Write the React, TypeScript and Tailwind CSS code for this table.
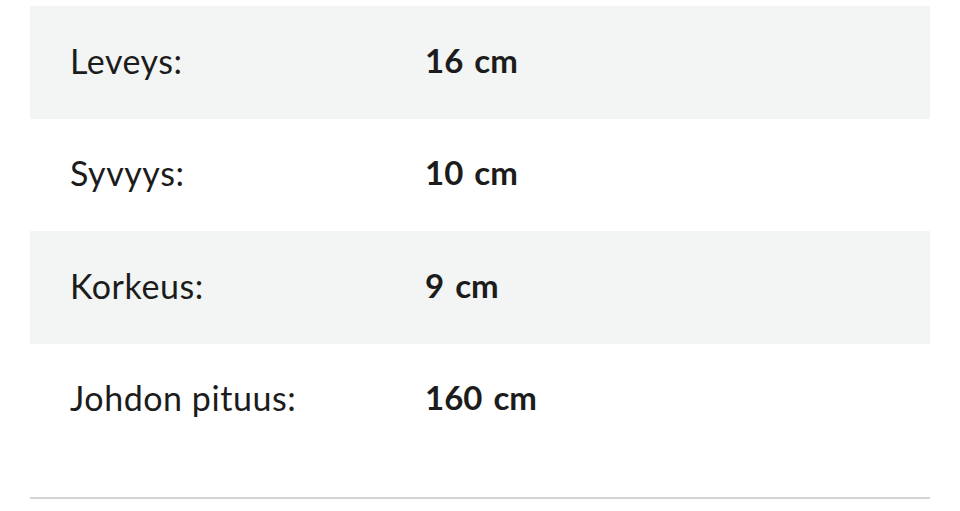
const SPECS = [
  { label: 'Leveys:', value: '16 cm' },
  { label: 'Syvyys:', value: '10 cm' },
  { label: 'Korkeus:', value: '9 cm' },
  { label: 'Johdon pituus:', value: '160 cm' },
];

export default function App() {
  return (
    <div className="w-[960px] h-[511px] bg-white pt-[6px] px-[30px] font-['Lato','Liberation_Sans',sans-serif] text-[#1c1c1c]">
      <div className="flex flex-col">
        {SPECS.map((row, i) => (
          <div
            key={row.label}
            className={`flex items-center h-[112.5px] pl-[40px] pb-[4px] ${i % 2 === 0 ? 'bg-[#f3f5f4]' : 'bg-white'}`}
          >
            <span className="w-[355px] text-[34px] tracking-[0.55px]">{row.label}</span>
            <span className="text-[33px] font-bold [word-spacing:3px]">{row.value}</span>
          </div>
        ))}
      </div>
      <div className="mt-[41px] h-[2px] bg-[#d4d4d4]" />
    </div>
  );
}
